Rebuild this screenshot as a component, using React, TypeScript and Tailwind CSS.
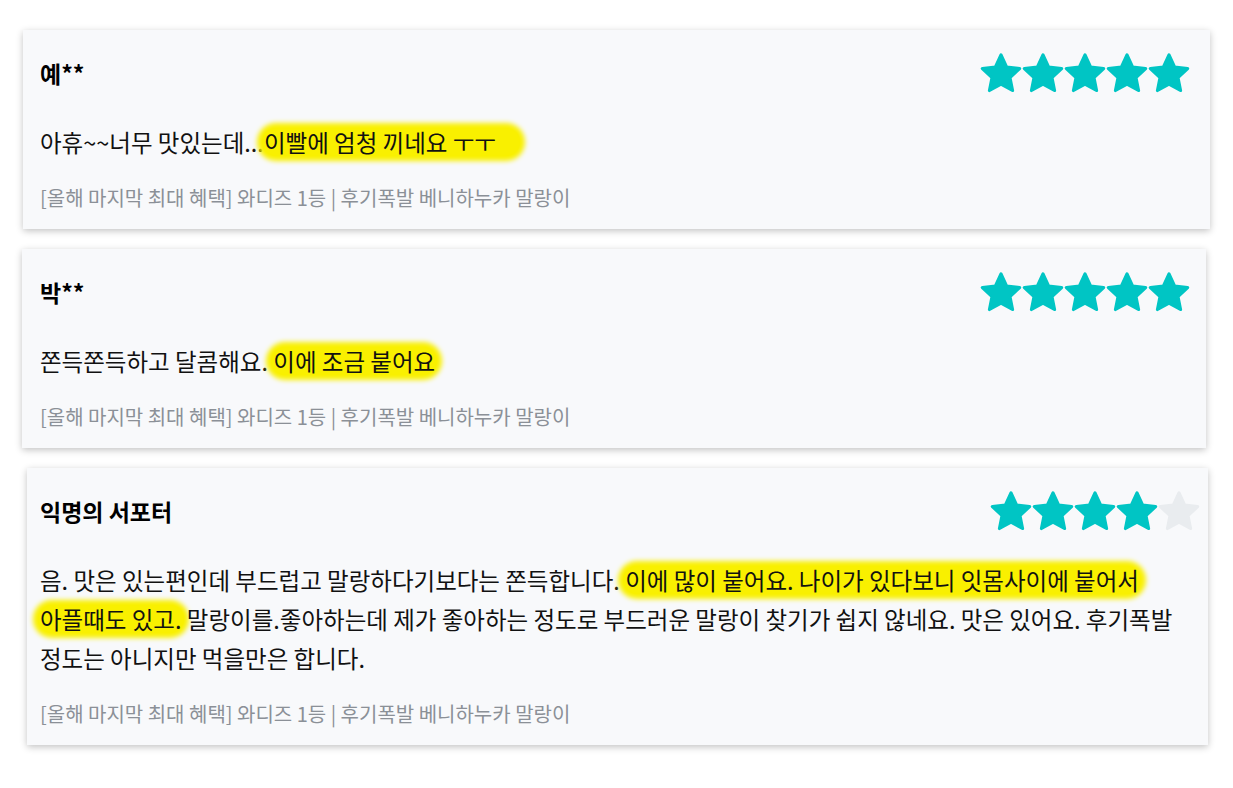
import React from "react";

const FONT = { fontFamily: '"Noto Sans CJK KR", "Noto Sans", sans-serif' };

function starPoints(cx: number, cy: number, R: number, r: number) {
  const pts: string[] = [];
  for (let i = 0; i < 10; i++) {
    const rad = i % 2 === 0 ? R : r;
    const a = (Math.PI / 5) * i - Math.PI / 2;
    pts.push(`${(cx + rad * Math.cos(a)).toFixed(2)},${(cy + rad * Math.sin(a)).toFixed(2)}`);
  }
  return pts.join(" ");
}

const PTS = starPoints(21, 21.6, 19.6, 9.4);

function Star({ filled }: { filled: boolean }) {
  const c = filled ? "#00c5c4" : "#e9ecef";
  return (
    <svg width="42" height="40" viewBox="0 0 42 40" className="block shrink-0">
      <polygon points={PTS} fill={c} stroke={c} strokeWidth="3.2" strokeLinejoin="round" />
    </svg>
  );
}

function Stars({ n }: { n: number }) {
  return (
    <div className="flex">
      {[0, 1, 2, 3, 4].map((i) => (
        <Star key={i} filled={i < n} />
      ))}
    </div>
  );
}

function Hl({ children, className = "" }: { children: React.ReactNode; className?: string }) {
  return (
    <span
      className={`-mx-[2px] inline-block rounded-full bg-[#f9f000] px-[2px] leading-[28px] shadow-[0_0_5px_5px_#f9f000] ${className}`}
    >
      {children}
    </span>
  );
}

const PRODUCT = "[올해 마지막 최대 혜택] 와디즈 1등 | 후기폭발 베니하누카 말랑이";

function Card({
  className,
  name,
  stars,
  children,
}: {
  className: string;
  name: string;
  stars: number;
  children: React.ReactNode;
}) {
  return (
    <div className={`bg-[#f8f9fb] pt-[23px] pb-[17px] shadow-[0_2px_7px_rgba(0,0,0,0.24)] ${className}`}>
      <div className="flex h-10 items-center justify-between">
        <div className="text-[23px] font-bold text-black">{name}</div>
        <Stars n={stars} />
      </div>
      <div className="mt-[30px] text-[23.5px] leading-[39px] text-[#111]">{children}</div>
      <div className="mt-[22px] text-[20px] leading-[28px] text-[#8b9097]">{PRODUCT}</div>
    </div>
  );
}

export default function App() {
  return (
    <div className="min-h-[788px] w-[1233px] bg-white pt-[30px]" style={FONT}>
      <Card className="ml-[23px] w-[1187px] pl-[17px] pr-[20px]" name="예**" stars={5}>
        아휴~~너무 맛있는데...<Hl className="pr-[24px]">이빨에 엄청 끼네요 ㅜㅜ</Hl>
      </Card>
      <Card className="mt-[20px] ml-[22px] w-[1184px] pl-[18px] pr-[16px]" name="박**" stars={5}>
        쫀득쫀득하고 달콤해요. <Hl>이에 조금 붙어요</Hl>
      </Card>
      <Card className="mt-[20px] ml-[27px] w-[1181px] pl-[13px] pr-[8px]" name="익명의 서포터" stars={4}>
        <span className="whitespace-nowrap">
          음. 맛은 있는편인데 부드럽고 말랑하다기보다는 쫀득합니다. <Hl>이에 많이 붙어요. 나이가 있다보니 잇몸사이에 붙어서</Hl>
        </span>
        <br />
        <span className="whitespace-nowrap">
          <Hl>아플때도 있고.</Hl> 말랑이를.좋아하는데 제가 좋아하는 정도로 부드러운 말랑이 찾기가 쉽지 않네요. 맛은 있어요. 후기폭발
        </span>
        <br />
        정도는 아니지만 먹을만은 합니다.
      </Card>
    </div>
  );
}
